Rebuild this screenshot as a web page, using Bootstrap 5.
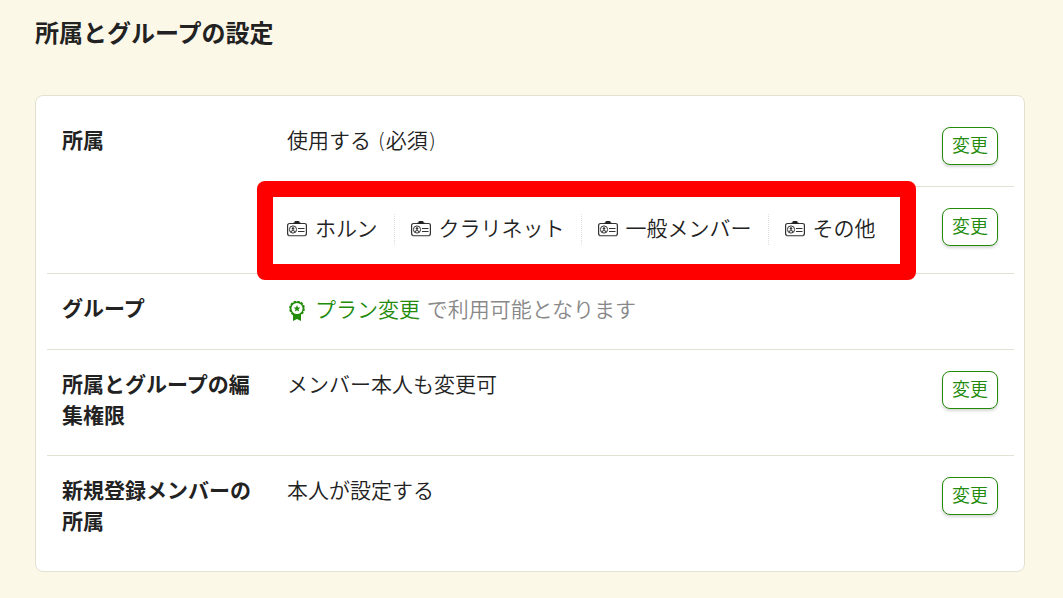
<!DOCTYPE html>
<html lang="ja">
<head>
<meta charset="utf-8">
<meta name="viewport" content="width=device-width, initial-scale=1">
<title>所属とグループの設定</title>
<link href="https://cdn.jsdelivr.net/npm/bootstrap@5.3.0/dist/css/bootstrap.min.css" rel="stylesheet">
<style>
body{background:#fcf8e8;color:#222;font-family:"DejaVu Sans","Noto Sans CJK JP",sans-serif;font-size:21px;font-weight:350;line-height:31px}
.page{padding:17px 38px 26px 35px}
h1{font-size:24px;line-height:34px;font-weight:700;margin:0 0 44px}
.panel{border:1px solid #e3e1d1;border-radius:8px;padding:10px 10px 10px 11px;background:#fff}
.setting + .setting{border-top:1px solid #e3e1d1}
.term{flex:0 0 225px;padding:20px 15px 23px;font-weight:700}
.line{padding:20px 16px 21px 15px;min-height:75px}
.line + .line{border-top:1px solid #e3e1d1}
.line.tags{padding:27px 16px 28px 15px}
.tags .change{margin-top:-6px;margin-bottom:-6px}
.line.upgrade{padding-top:21px}
.change{flex:none;width:56px;height:38px;margin-top:1px;padding:0;border:1px solid #228b0b;border-radius:8px;background:#fff;color:#228b0b;font-size:18px;font-weight:350;line-height:36px;box-shadow:0 2px 3px rgba(0,0,0,.16)}
.change:hover,.change:active{background:#f3faf1;color:#228b0b}
.tag-list li{display:flex;align-items:center;gap:8px;padding-right:16px}
.tag-list li + li{border-left:1px dotted #ddd;padding-left:16px}
.tag-list svg,.plan svg{flex:none;width:20px;height:20px}
.frame{position:absolute;inset:-33px -24px -35px -30px;border:16px solid #f00;border-radius:8px;pointer-events:none;z-index:2}
.note{color:#888}
.note a{color:#228b0b}
</style>
</head>
<body>
<svg width="0" height="0" class="position-absolute" aria-hidden="true">
  <symbol id="card-icon" viewBox="0 0 20 20">
    <path d="M7 3.500H2.500Q.6 3.500.6 5.500V13.500Q.6 15.500 2.500 15.500H17.500Q19.400 15.500 19.400 13.500V5.500Q19.400 3.500 17.500 3.500H13" fill="none" stroke="#333" stroke-width="1.200"/>
    <path d="M1.500 16H18.500" stroke="#999" stroke-width="1"/>
    <path d="M7.500 2.500V2Q7.500 1 8.500 1H11.500Q12.500 1 12.500 2V2.500H13.500V4H6.500V2.500Z" fill="#222"/>
    <circle cx="6" cy="9.500" r="3.600" fill="none" stroke="#333"/>
    <circle cx="6" cy="8.500" r="1.300" fill="#333"/>
    <path d="M3.800 11.800Q6 9.200 8.200 11.800" fill="none" stroke="#333" stroke-width="1.200"/>
    <path d="M11 8.500H17.500M11 11.500H17.500" stroke="#333" stroke-width="1.200"/>
  </symbol>
  <symbol id="award-icon" viewBox="0 0 20 20">
    <path d="M6 13V20L10 18L14 20V13" fill="#228b0b"/>
    <circle cx="10" cy="7.500" r="6.300" fill="#fff" stroke="#228b0b" stroke-width="1.500"/>
    <circle cx="10" cy="7.500" r="7" fill="none" stroke="#228b0b" stroke-width="1.700" stroke-dasharray="2.500 1.165"/>
    <path d="M10 4L11 6.400L13.300 6.600L11.500 8.200L12.200 10.600L10 9.300L7.800 10.600L8.500 8.200L6.700 6.600L9 6.400Z" fill="#228b0b"/>
  </symbol>
</svg>
<main class="page">
  <h1>所属とグループの設定</h1>
  <section class="panel">
    <div class="setting d-flex">
      <div class="term">所属</div>
      <div class="flex-grow-1">
        <div class="line d-flex justify-content-between align-items-start">
          <div>使用する (必須)</div>
          <button type="button" class="btn change" aria-label="所属を変更">変更</button>
        </div>
        <div class="line tags d-flex justify-content-between align-items-start">
          <div class="position-relative">
            <ul class="tag-list list-unstyled d-flex flex-wrap mb-0">
              <li><svg aria-hidden="true"><use href="#card-icon"/></svg>ホルン</li>
              <li><svg aria-hidden="true"><use href="#card-icon"/></svg>クラリネット</li>
              <li><svg aria-hidden="true"><use href="#card-icon"/></svg>一般メンバー</li>
              <li><svg aria-hidden="true"><use href="#card-icon"/></svg>その他</li>
            </ul>
            <span class="frame"></span>
          </div>
          <button type="button" class="btn change" aria-label="所属の一覧を変更">変更</button>
        </div>
      </div>
    </div>
    <div class="setting d-flex">
      <div class="term">グループ</div>
      <div class="line upgrade flex-grow-1">
        <div class="plan note d-flex align-items-center gap-2"><svg aria-hidden="true"><use href="#award-icon"/></svg><span><a href="#" class="text-decoration-none">プラン変更</a> で利用可能となります</span></div>
      </div>
    </div>
    <div class="setting d-flex">
      <div class="term">所属とグループの編集権限</div>
      <div class="line flex-grow-1 d-flex justify-content-between align-items-start">
        <div>メンバー本人も変更可</div>
        <button type="button" class="btn change" aria-label="編集権限を変更">変更</button>
      </div>
    </div>
    <div class="setting d-flex">
      <div class="term">新規登録メンバーの所属</div>
      <div class="line flex-grow-1 d-flex justify-content-between align-items-start">
        <div>本人が設定する</div>
        <button type="button" class="btn change" aria-label="新規登録メンバーの所属を変更">変更</button>
      </div>
    </div>
  </section>
</main>
<script src="https://cdn.jsdelivr.net/npm/bootstrap@5.3.0/dist/js/bootstrap.bundle.min.js"></script>
</body>
</html>
